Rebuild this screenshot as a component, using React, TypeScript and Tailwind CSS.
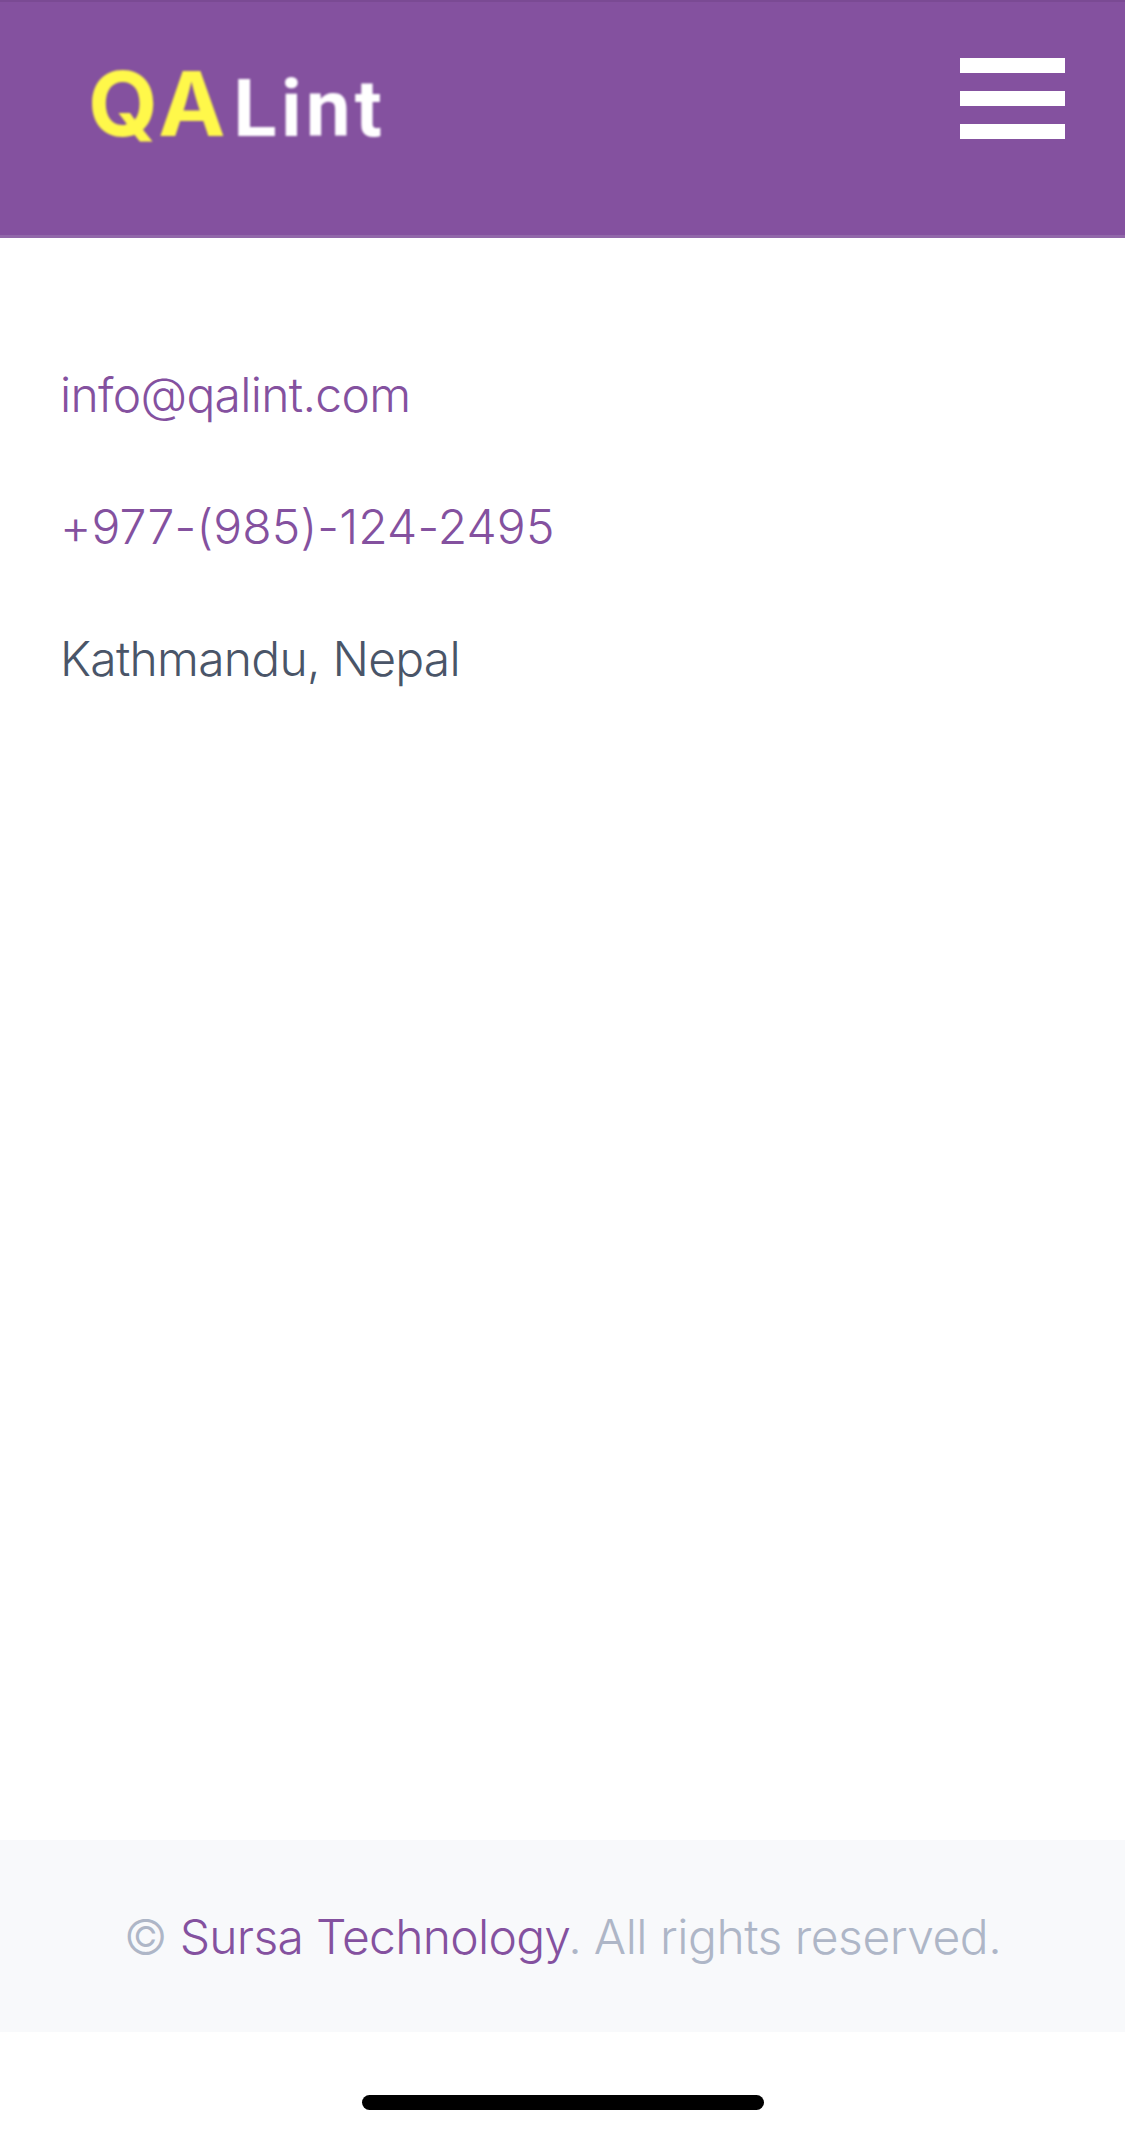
import React from 'react';

const App: React.FC = () => {
  return (
    <div className="flex h-[2134px] w-[1125px] flex-col overflow-hidden bg-white font-['Inter',sans-serif]">
      {/* Header */}
      <header className="flex h-[238px] shrink-0 items-start justify-between border-t-2 border-b-[3px] border-t-[#7a4a93] border-b-[#9168a9] bg-[#84519f] pl-[88px] pr-[60px]">
        <div className="mt-[56px] flex items-baseline leading-[92px] blur-[0.8px]">
          <span className="text-[90px] font-bold tracking-[4px] text-[#fff84a]">QA</span>
          <span className="ml-[4px] font-['Roboto',sans-serif] text-[80px] font-bold tracking-[4px] text-white">Lint</span>
        </div>
        <button className="mt-[56px] flex w-[105px] flex-col gap-[18px]">
          <span className="h-[15px] w-full bg-white" />
          <span className="h-[15px] w-full bg-white" />
          <span className="h-[15px] w-full bg-white" />
        </button>
      </header>

      {/* Contact details */}
      <main className="flex flex-1 flex-col gap-[72px] px-[60px] pt-[127px] text-[48px] leading-[60px] font-[360]">
        <a className="tracking-[-0.7px] text-[#84519f]">info@qalint.com</a>
        <a className="tracking-[0.15px] text-[#84519f]">+977-(985)-124-2495</a>
        <p className="tracking-[-0.75px] text-[#4a5568]">Kathmandu, Nepal</p>
      </main>

      {/* Footer */}
      <footer className="flex h-[192px] shrink-0 items-center justify-center bg-[#f8f9fb] pt-[2px] text-[48px] leading-[60px] font-[360] tracking-[-0.72px] text-[#aeb6c7]">
        <p>
          © <a className="text-[#84519f]">Sursa Technology</a>. <span className="tracking-[-0.5px]">All rights reserved.</span>
        </p>
      </footer>

      {/* Home indicator */}
      <div className="flex h-[102px] shrink-0 justify-center pt-[63px]">
        <div className="h-[15px] w-[402px] rounded-full bg-black" />
      </div>
    </div>
  );
};

export default App;
